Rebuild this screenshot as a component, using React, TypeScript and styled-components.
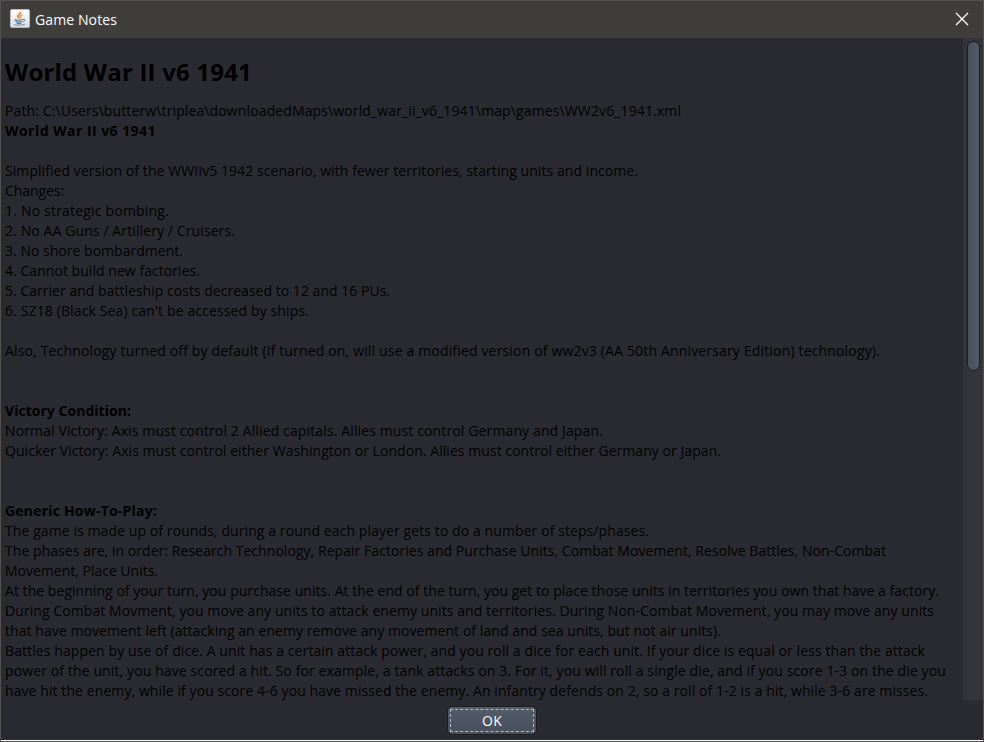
import React from 'react';
import styled, { createGlobalStyle } from 'styled-components';

const GlobalStyle = createGlobalStyle`
  * { box-sizing: border-box; }
  body { margin: 0; background: #2a2a32; }
`;

const Window = styled.div`
  display: flex;
  flex-direction: column;
  width: 984px;
  height: 742px;
  overflow: hidden;
  background: #2a2a32;
  border: 1px solid #535250;
  font-family: 'Open Sans', 'Noto Sans', sans-serif;
  font-size: 14px;
  color: #000;
`;

const TitleBar = styled.header`
  display: flex;
  flex: none;
  align-items: center;
  height: 37px;
  padding: 0 14px 1px 9px;
  background: #3f3e3b;
  color: #fff;
`;

const Title = styled.h1`
  flex: 1;
  margin: 1px 0 0 5px;
  font-size: 14px;
  font-weight: 400;
  line-height: 20px;
  letter-spacing: 0.11px;
`;

const CloseButton = styled.button`
  display: flex;
  padding: 0;
  border: 0;
  background: none;
  color: #fff;
`;

const Content = styled.main`
  display: flex;
  flex: none;
  height: 662px;
`;

const Notes = styled.article`
  flex: 1;
  min-width: 0;
  padding: 17px 0 0 4px;
  overflow: hidden;
  white-space: pre;
`;

const Heading = styled.h2`
  margin: 0 0 12px;
  font-size: 24px;
  line-height: 34px;
  letter-spacing: 0.192px;
`;

const Line = styled.div<{ $tracking?: number; $bold?: boolean }>`
  height: 20px;
  line-height: 20px;
  font-weight: ${(p) => (p.$bold ? 700 : 400)};
  letter-spacing: ${(p) => p.$tracking ?? 0}px;
`;

const ScrollTrack = styled.div`
  width: 20px;
  padding: 3px 3px 0 4px;
  background: #34343c;
`;

const ScrollThumb = styled.div`
  width: 13px;
  height: 330px;
  border: 1px solid #1c1e24;
  border-radius: 7px;
  background: linear-gradient(90deg, #47515d, #525c69);
`;

const Footer = styled.footer`
  display: flex;
  flex: 1;
  justify-content: center;
  padding-top: 6px;
  border-bottom: 1px solid #fff;
`;

const OkButton = styled.button`
  width: 90px;
  height: 29px;
  padding: 2px;
  border: 1px solid #1a1c22;
  border-radius: 5px;
  background: linear-gradient(#535c69, #47505c) padding-box;
  color: #fff;
  font: 14px/21px 'Open Sans', 'Noto Sans', sans-serif;
`;

const FocusRing = styled.span`
  display: block;
  height: 23px;
  border: 1px dashed #b5bcc5;
  letter-spacing: 0.27px;
`;

type NoteLine = { text: string; tracking?: number; bold?: boolean };
const blank: NoteLine = { text: '' };

const lines: NoteLine[] = [
  { text: 'Path: C:\\Users\\butterw\\triplea\\downloadedMaps\\world_war_ii_v6_1941\\map\\games\\WW2v6_1941.xml', tracking: 0.123 },
  { text: 'World War II v6 1941', tracking: 0.458, bold: true },
  blank,
  { text: 'Simplified version of the WWIIv5 1942 scenario, with fewer territories, starting units and income.', tracking: 0.069 },
  { text: 'Changes:', tracking: -0.073 },
  { text: '1. No strategic bombing.', tracking: 0.195 },
  { text: '2. No AA Guns / Artillery / Cruisers.', tracking: 0.105 },
  { text: '3. No shore bombardment.', tracking: 0.022 },
  { text: '4. Cannot build new factories.', tracking: 0.048 },
  { text: '5. Carrier and battleship costs decreased to 12 and 16 PUs.', tracking: 0.024 },
  { text: "6. SZ18 (Black Sea) can't be accessed by ships.", tracking: 0.125 },
  blank,
  { text: 'Also, Technology turned off by default (if turned on, will use a modified version of ww2v3 (AA 50th Anniversary Edition) technology).', tracking: 0.163 },
  blank,
  blank,
  { text: 'Victory Condition:', tracking: 0.033, bold: true },
  { text: 'Normal Victory: Axis must control 2 Allied capitals. Allies must control Germany and Japan.', tracking: 0.126 },
  { text: 'Quicker Victory: Axis must control either Washington or London. Allies must control either Germany or Japan.', tracking: 0.055 },
  blank,
  blank,
  { text: 'Generic How-To-Play:', tracking: 0.201, bold: true },
  { text: 'The game is made up of rounds, during a round each player gets to do a number of steps/phases.', tracking: 0.088 },
  { text: 'The phases are, in order: Research Technology, Repair Factories and Purchase Units, Combat Movement, Resolve Battles, Non-Combat', tracking: 0.048 },
  { text: 'Movement, Place Units.', tracking: -0.006 },
  { text: 'At the beginning of your turn, you purchase units. At the end of the turn, you get to place those units in territories you own that have a factory.', tracking: 0.044 },
  { text: 'During Combat Movment, you move any units to attack enemy units and territories. During Non-Combat Movement, you may move any units', tracking: 0.075 },
  { text: 'that have movement left (attacking an enemy remove any movement of land and sea units, but not air units).', tracking: 0.067 },
  { text: 'Battles happen by use of dice. A unit has a certain attack power, and you roll a dice for each unit. If your dice is equal or less than the attack', tracking: 0.093 },
  { text: 'power of the unit, you have scored a hit. So for example, a tank attacks on 3. For it, you will roll a single die, and if you score 1-3 on the die you', tracking: 0.114 },
  { text: 'have hit the enemy, while if you score 4-6 you have missed the enemy. An infantry defends on 2, so a roll of 1-2 is a hit, while 3-6 are misses.', tracking: 0.085 },
];

const JavaIcon = () => (
  <svg width="20" height="20" viewBox="0 0 20 20" fill="none">
    <defs>
      <linearGradient id="tile" x1="0" y1="0" x2="0" y2="1">
        <stop offset="0" stopColor="#ffffff" />
        <stop offset="1" stopColor="#d9dde0" />
      </linearGradient>
    </defs>
    <rect x="0.5" y="0.5" width="19" height="18" rx="1.5" fill="url(#tile)" stroke="#b4bbc1" />
    <path d="M10.2 3c1 2-2.8 2.600-2.400 4.400.2.9 1.200 1.300 1.400 2" stroke="#e5883a" strokeWidth="1.8" />
    <path d="M12 5.600c-1.800.8-2.400 1.500-1.400 2.400.4.5.2 1-.2 1.400" stroke="#e5883a" strokeWidth="1.2" />
    <path d="M4.600 10.600c2 .7 6 .6 8.200-.1M5.400 12.300c1.700.7 5.300.7 6.900 0M6.400 14c1.400.6 3.600.6 5 0" stroke="#58809f" strokeWidth="1.2" />
    <path d="M13 10.500c2.500-.8 2.700 1.500-.1 2.500" stroke="#58809f" />
    <path d="M4 15c-1 1.300 7.900 1.800 11.100 0" stroke="#6f92ad" />
  </svg>
);

const CloseIcon = () => (
  <svg width="14" height="14" viewBox="0 0 14 14" stroke="currentColor" strokeWidth="1.3">
    <path d="M1 1l12 12M13 1L1 13" />
  </svg>
);

export default function App() {
  return (
    <>
      <GlobalStyle />
      <Window>
        <TitleBar>
          <JavaIcon />
          <Title>Game Notes</Title>
          <CloseButton aria-label="Close">
            <CloseIcon />
          </CloseButton>
        </TitleBar>
        <Content>
          <Notes>
            <Heading>World War II v6 1941</Heading>
            {lines.map((line, i) => (
              <Line key={i} $tracking={line.tracking} $bold={line.bold}>
                {line.text}
              </Line>
            ))}
          </Notes>
          <ScrollTrack>
            <ScrollThumb />
          </ScrollTrack>
        </Content>
        <Footer>
          <OkButton>
            <FocusRing>OK</FocusRing>
          </OkButton>
        </Footer>
      </Window>
    </>
  );
}
